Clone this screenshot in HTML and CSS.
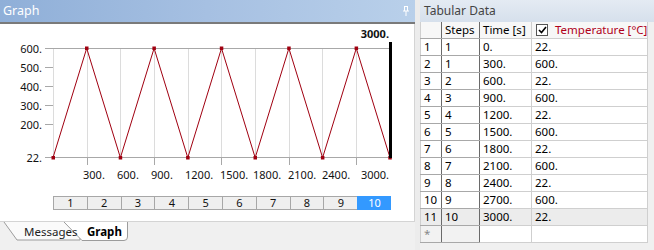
FILE: index.html
```html
<!DOCTYPE html>
<html>
<head>
<meta charset="utf-8">
<link rel="stylesheet" href="styles.css">
</head>
<body>
<div class="app">
  <section class="graph-panel">
    <header class="graph-title">
      <span class="title-text">Graph</span>
      <svg class="pin" width="8" height="10" viewBox="0 0 8 10"><path d="M2 0.5h4M2.5 0.5v4.5M5.5 0.5v4.5M1 5h6M4 5v5" stroke="#fff" stroke-width="1" fill="none"/></svg>
    </header>
    <div class="plot">
      <svg class="chart" width="414" height="168" viewBox="0 24 414 168">
        <g stroke="#dcdcdc" stroke-width="1">
          <line x1="53.5" y1="48" x2="53.5" y2="158"/>
          <line x1="87.5" y1="48" x2="87.5" y2="158"/>
          <line x1="120.5" y1="48" x2="120.5" y2="158"/>
          <line x1="154.5" y1="48" x2="154.5" y2="158"/>
          <line x1="188.5" y1="48" x2="188.5" y2="158"/>
          <line x1="221.5" y1="48" x2="221.5" y2="158"/>
          <line x1="255.5" y1="48" x2="255.5" y2="158"/>
          <line x1="289.5" y1="48" x2="289.5" y2="158"/>
          <line x1="322.5" y1="48" x2="322.5" y2="158"/>
          <line x1="356.5" y1="48" x2="356.5" y2="158"/>
        </g>
        <g stroke="#a8a8a8" stroke-width="1">
          <line x1="45" y1="48.5" x2="390" y2="48.5"/>
          <line x1="45" y1="157.5" x2="390" y2="157.5"/>
          <line x1="45" y1="67.5" x2="53" y2="67.5"/>
          <line x1="45" y1="86.5" x2="53" y2="86.5"/>
          <line x1="45" y1="105.5" x2="53" y2="105.5"/>
          <line x1="45" y1="124.5" x2="53" y2="124.5"/>
          <line x1="87.5" y1="158" x2="87.5" y2="165"/>
          <line x1="154.5" y1="158" x2="154.5" y2="165"/>
          <line x1="221.5" y1="158" x2="221.5" y2="165"/>
          <line x1="289.5" y1="158" x2="289.5" y2="165"/>
          <line x1="356.5" y1="158" x2="356.5" y2="165"/>
        </g>
        <g class="ylabels" text-anchor="end">
          <text x="42" y="53">600.</text>
          <text x="42" y="72">500.</text>
          <text x="42" y="91">400.</text>
          <text x="42" y="110">300.</text>
          <text x="42" y="129">200.</text>
          <text x="42" y="162">22.</text>
        </g>
        <g class="xlabels">
          <text x="83" y="179">300.</text>
          <text x="117" y="179">600.</text>
          <text x="151" y="179">900.</text>
          <text x="185" y="179">1200.</text>
          <text x="220" y="179">1500.</text>
          <text x="253" y="179">1800.</text>
          <text x="288" y="179">2100.</text>
          <text x="322" y="179">2400.</text>
          <text x="389" y="179" text-anchor="end">3000.</text>
        </g>
        <polyline fill="none" stroke="#a00010" stroke-width="1" points="53,157.7 86.7,48.3 120.4,157.7 154.1,48.3 187.8,157.7 221.5,48.3 255.2,157.7 288.9,48.3 322.6,157.7 356.3,48.3 390,157.7"/>
        <g fill="#a00010">
          <rect x="51.5" y="156" width="3.5" height="3.5"/>
          <rect x="85" y="46.5" width="3.5" height="3.5"/>
          <rect x="118.7" y="156" width="3.5" height="3.5"/>
          <rect x="152.4" y="46.5" width="3.5" height="3.5"/>
          <rect x="186.1" y="156" width="3.5" height="3.5"/>
          <rect x="219.8" y="46.5" width="3.5" height="3.5"/>
          <rect x="253.5" y="156" width="3.5" height="3.5"/>
          <rect x="287.2" y="46.5" width="3.5" height="3.5"/>
          <rect x="320.9" y="156" width="3.5" height="3.5"/>
          <rect x="354.6" y="46.5" width="3.5" height="3.5"/>
          <rect x="388.3" y="156" width="3.5" height="3.5"/>
        </g>
        <rect x="389" y="42" width="3" height="116" fill="#000"/>
        <text class="cursor-label" x="389" y="38" text-anchor="end">3000.</text>
      </svg>
      <div class="steps">
        <div class="step">1</div><div class="step">2</div><div class="step">3</div><div class="step">4</div><div class="step">5</div><div class="step">6</div><div class="step">7</div><div class="step">8</div><div class="step">9</div><div class="step active">10</div>
      </div>
    </div>
    <div class="tabstrip">
      <svg class="tabs" width="414" height="27" viewBox="0 0 414 27">
        <path d="M4 0 L17 18 L80 18 L80 0" fill="#fafafa" stroke="#9c9c9c" stroke-width="1"/>
        <path d="M64 0 L82 18.5 L124 18.5 Q127.5 18.5 127.5 15 L127.5 0" fill="#ffffff" stroke="#9c9c9c" stroke-width="1"/>
        <text class="tab-label" x="24" y="14">Messages</text>
        <text class="tab-label tab-active" x="87" y="14">Graph</text>
      </svg>
    </div>
  </section>
  <div class="splitter"></div>
  <section class="table-panel">
    <header class="table-title">Tabular Data</header>
    <table class="grid">
      <thead>
        <tr><th class="rh"></th><th class="c-steps">Steps</th><th class="c-time">Time [s]</th><th class="c-temp"><span class="check"><svg width="9" height="8" viewBox="0 0 9 8"><path d="M1 4 L3.5 6.5 L8 1" stroke="#000" stroke-width="1.6" fill="none"/></svg></span>Temperature [°C]</th></tr>
      </thead>
      <tbody>
        <tr><td class="rh">1</td><td class="c-steps">1</td><td>0.</td><td>22.</td></tr>
        <tr><td class="rh">2</td><td class="c-steps">1</td><td>300.</td><td>600.</td></tr>
        <tr><td class="rh">3</td><td class="c-steps">2</td><td>600.</td><td>22.</td></tr>
        <tr><td class="rh">4</td><td class="c-steps">3</td><td>900.</td><td>600.</td></tr>
        <tr><td class="rh">5</td><td class="c-steps">4</td><td>1200.</td><td>22.</td></tr>
        <tr><td class="rh">6</td><td class="c-steps">5</td><td>1500.</td><td>600.</td></tr>
        <tr><td class="rh">7</td><td class="c-steps">6</td><td>1800.</td><td>22.</td></tr>
        <tr><td class="rh">8</td><td class="c-steps">7</td><td>2100.</td><td>600.</td></tr>
        <tr><td class="rh">9</td><td class="c-steps">8</td><td>2400.</td><td>22.</td></tr>
        <tr><td class="rh">10</td><td class="c-steps">9</td><td>2700.</td><td>600.</td></tr>
        <tr class="selected"><td class="rh">11</td><td class="c-steps">10</td><td>3000.</td><td>22.</td></tr>
        <tr class="new"><td class="rh star">*</td><td class="c-steps"></td><td></td><td></td></tr>
      </tbody>
    </table>
  </section>
</div>
</body>
</html>
```
FILE: styles.css
```css
html, body {
  margin: 0;
  padding: 0;
  background: #f0f0f0;
  width: 654px;
  height: 250px;
  overflow: hidden;
  font-family: "Noto Sans", "DejaVu Sans", sans-serif;
  font-size: 11px;
  color: #000;
}
.app {
  display: flex;
  width: 654px;
  height: 250px;
}
.graph-panel {
  width: 415px;
  display: flex;
  flex-direction: column;
}
.graph-title {
  height: 22px;
  border-bottom: 2px solid #7a7a7a;
  background: linear-gradient(to right, #8fafd8 0%, #a6c0e2 50%, #b9d0ea 100%);
  display: flex;
  align-items: center;
  justify-content: space-between;
  padding: 0 5px 0 3px;
}
.title-text {
  color: #fff;
  font-size: 12.5px;
  line-height: 22px;
}
.pin { display: block; }
.plot {
  background: #fff;
  border-right: 1px solid #d4d4d4;
  border-bottom: 1px solid #d4d4d4;
  height: 198px;
  box-sizing: border-box;
  padding-top: 0;
}
.chart { display: block; }
.chart text {
  font-family: "Noto Sans", "DejaVu Sans", sans-serif;
  font-size: 11px;
  fill: #111;
}
.chart .cursor-label {
  font-weight: bold;
}
.steps {
  display: flex;
  margin: 4px 0 0 53px;
  width: 338px;
  height: 14px;
}
.step {
  flex: 1;
  background: #efefef;
  border: 1px solid #a7a7a7;
  border-right: none;
  font-size: 11px;
  line-height: 12px;
  text-align: center;
  color: #111;
}
.step.active {
  background: #3399ff;
  border-color: #3399ff;
  color: #fff;
}
.tabstrip {
  height: 27px;
  background: #f0f0f0;
}
.tabs { display: block; }
.tab-label {
  font-family: "Noto Sans", "DejaVu Sans", sans-serif;
  font-size: 11.5px;
  fill: #222;
}
.tab-active { font-weight: bold; fill: #000; }
.splitter {
  width: 5px;
  background: #ececec;
}
.table-panel {
  width: 234px;
  background: #f0f0f0;
}
.table-title {
  height: 22px;
  line-height: 22px;
  padding-left: 4px;
  font-size: 12px;
  color: #444;
  background: linear-gradient(to bottom, #e4ebf3, #d6e0ec);
}
.grid {
  border-collapse: collapse;
  table-layout: fixed;
  width: 228px;
  background: #fff;
  border-left: 1px solid #6a6a6a;
  border-right: 1px solid #8a8a8a;
}
.grid th, .grid td {
  height: 16px;
  padding: 0 0 0 3px;
  line-height: 16px;
  font-weight: normal;
  text-align: left;
  white-space: nowrap;
  overflow: hidden;
  border: 1px solid #cfcfcf;
  font-size: 11.5px;
}
.grid th {
  background: #f7f7f7;
  border-top: none;
}
.grid .rh {
  width: 17px;
  border-right: 1px solid #6a6a6a;
  border-bottom-color: #a8a8a8;
}
.grid .c-steps {
  width: 34px;
  border-right: 1px solid #6a6a6a;
  border-bottom-color: #a8a8a8;
}
.grid .c-time { width: 48px; }
.grid th.c-temp {
  color: #b0001a;
  padding-left: 4px;
}
.check {
  display: inline-block;
  width: 10px;
  height: 10px;
  border: 1px solid #555;
  background: #fff;
  vertical-align: -2px;
  margin-right: 7px;
  position: relative;
}
.check svg {
  display: block;
  margin: 1px 0 0 1px;
}
.grid tr.selected td { background: #ececec; }
.grid tr.new td.rh, .grid tr.new td.c-steps { background: #f2f2f2; }
.star { color: #888; font-size: 10px; }
```
